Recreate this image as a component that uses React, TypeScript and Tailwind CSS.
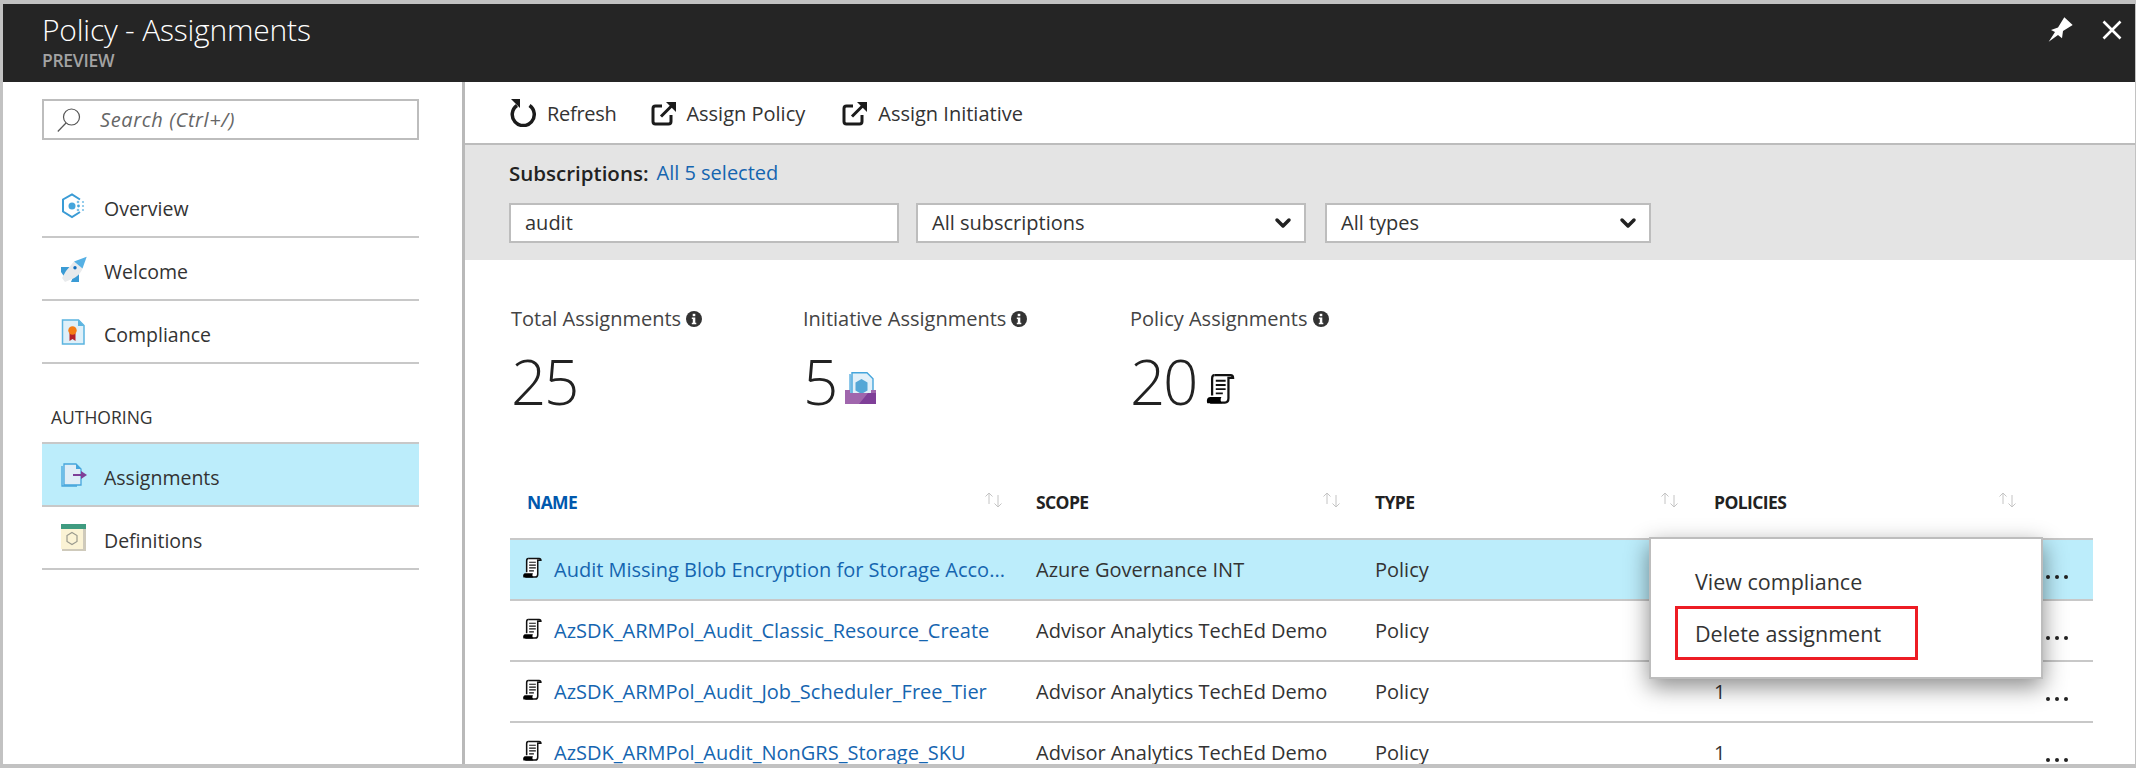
import { ChevronDown } from 'lucide-react'

const font = { fontFamily: '"Open Sans", "Noto Sans", sans-serif' }

const ScrollIcon = ({ className }: { className: string }) => (
    <svg viewBox="0 0 20 22" className={className}>
        <path d="M6 1.500h11.500c1.200 0 1.800.8 1.800 2H16V18c0 2-1 3-2.500 3H3" fill="#fff" stroke="#111" strokeWidth="1.600" />
        <path d="M6 1.500C4.800 1.500 4.400 2.500 4.400 4v12" fill="none" stroke="#111" strokeWidth="1.600" />
        <path d="M7 5.500h7M7 8.500h7M7 11.500h7M7 14.500h5" stroke="#111" strokeWidth="1.300" />
        <path d="M1 21.500c-.8-2.500.2-4.500 2-4.500h8c-.8 1.500-.8 3 .5 4.500z" fill="#000" />
    </svg>
)

const ExternalIcon = () => (
    <svg viewBox="0 0 26 26" className="h-[26px] w-[26px] shrink-0" fill="none" stroke="#1b1b1b">
        <path d="M11 6H4.500C3 6 2 7 2 8.500v13C2 23 3 24 4.500 24h13c1.500 0 2.500-1 2.500-2.500V15" strokeWidth="3" />
        <path d="M10 16.500 23 3.500" strokeWidth="3" />
        <path d="M15 2h10v10z" fill="#1b1b1b" stroke="none" />
    </svg>
)

const InfoIcon = () => (
    <svg viewBox="0 0 16 16" className="h-4 w-4 shrink-0">
        <circle cx="8" cy="8" r="8" fill="#333" />
        <rect x="6.700" y="2.800" width="2.600" height="2.400" fill="#fff" />
        <path d="M5.800 6.500h3.500v5.200h1v1.500H5.800v-1.500h1V8h-1z" fill="#fff" />
    </svg>
)

const SortIcon = () => (
    <svg viewBox="0 0 20 16" className="h-4 w-5 shrink-0 -translate-y-[3px]" fill="none" stroke="#c4c4c4" strokeWidth="1">
        <path d="M5 12V1M1.500 4.500 5 1l3.500 3.500" />
        <path d="M14 3v12M10.500 11.500 14 15l3.500-3.500" />
    </svg>
)

const OverviewIcon = () => (
    <svg viewBox="0 0 24 26" className="h-[26px] w-6">
        <path d="M19 6.500 11 1.500 2 6.500v12l9 5.500 8-5" fill="none" stroke="#3a9bd5" strokeWidth="2" />
        <circle cx="11" cy="13" r="3.500" fill="#45a5dc" />
        <circle cx="17" cy="9" r="1.300" fill="#7cc1e8" />
        <circle cx="22" cy="9" r="1.100" fill="#7cc1e8" />
        <circle cx="17.500" cy="13" r="1.400" fill="#45a5dc" />
        <circle cx="22" cy="13" r="1.100" fill="#7cc1e8" />
        <circle cx="17" cy="17" r="1.300" fill="#7cc1e8" />
        <circle cx="22" cy="17" r="1.100" fill="#7cc1e8" />
    </svg>
)

const WelcomeIcon = () => (
    <svg viewBox="0 0 26 26" className="h-[26px] w-[26px]">
        <path d="M0 11h9v10H3.500L0 16z" fill="#3a9bd5" />
        <path d="M10 26h8V15l-6 6z" fill="#3a9bd5" />
        <path d="M13 5.500l8.500 7c-1.500 4.500-5.500 8.500-10.500 10.500L4 26l-3-4 4-7z" fill="#e8eaec" />
        <path d="M25.700.7 13 5.500l8.500 7z" fill="#55b0e4" />
        <circle cx="14" cy="11.700" r="1.700" fill="#0f6cbd" />
    </svg>
)

const ComplianceIcon = () => (
    <svg viewBox="0 0 24 26" className="h-[26px] w-6">
        <path d="M1.500 1h16L23 6.500V25H1.500z" fill="#dff0f9" stroke="#5bb4e0" strokeWidth="1.500" />
        <path d="M17 1v6h6z" fill="#5bb4e0" />
        <path d="M8.500 14v8l3-2 3 2v-8z" fill="#b4202a" />
        <circle cx="11.500" cy="11.500" r="4.200" fill="#f57c14" />
    </svg>
)

const AssignmentsIcon = () => (
    <svg viewBox="0 0 26 24" className="h-6 w-[26px]">
        <path d="M1 3v20h15" fill="none" stroke="#45a5dc" strokeWidth="1.300" />
        <path d="M3 1h12l5 5v16H3z" fill="#dfeef7" stroke="#45a5dc" strokeWidth="1.300" />
        <path d="M15 1v5h5z" fill="#45a5dc" />
        <path d="M12 11h8V8l6 4-6 4v-3h-8z" fill="#7f3f98" />
    </svg>
)

const DefinitionsIcon = () => (
    <svg viewBox="0 0 26 27" className="h-[27px] w-[26px]">
        <rect x="1" y="5" width="24" height="22" fill="#cfcabb" />
        <rect x="0" y="3" width="22" height="22" fill="#fbf3d5" />
        <rect x="0" y="0" width="25" height="5" fill="#3f9b80" />
        <path d="M11 8.500l5 3v6l-5 3-5-3v-6z" fill="none" stroke="#9a9a8e" strokeWidth="1.200" />
    </svg>
)

const InitiativeIcon = () => (
    <svg viewBox="0 0 31 32" className="h-8 w-[31px]">
        <path d="M5 2v20h20" fill="#cfe4f2" stroke="#45a5dc" strokeWidth="1.200" />
        <path d="M7 .7h15l6 6V24H7z" fill="#e2f0f9" stroke="#45a5dc" strokeWidth="1.400" />
        <path d="M16.500 7l6 3.500v8l-6 3.500-6-3.500v-8z" fill="#55a7d6" />
        <path d="M0 18h5v3h21v-3h5v14H0z" fill="#a066ad" />
        <path d="M14 32l9-11h8v11z" fill="#7f3f98" />
    </svg>
)

const navTop = [
    { label: 'Overview', icon: <OverviewIcon /> },
    { label: 'Welcome', icon: <WelcomeIcon /> },
    { label: 'Compliance', icon: <ComplianceIcon /> },
]

// the first two rows have their policy count hidden behind the open menu
const rows = [
    { name: 'Audit Missing Blob Encryption for Storage Acco...', scope: 'Azure Governance INT', policies: '', selected: true },
    { name: 'AzSDK_ARMPol_Audit_Classic_Resource_Create', scope: 'Advisor Analytics TechEd Demo', policies: '', selected: false },
    { name: 'AzSDK_ARMPol_Audit_Job_Scheduler_Free_Tier', scope: 'Advisor Analytics TechEd Demo', policies: '1', selected: false },
    { name: 'AzSDK_ARMPol_Audit_NonGRS_Storage_SKU', scope: 'Advisor Analytics TechEd Demo', policies: '1', selected: false },
]

const NavRow = ({ label, icon, active }: { label: string; icon: React.ReactNode; active?: boolean }) => (
    <div className={`flex h-[63px] items-center border-b-2 border-[#c8c8c8] pl-[19px] ${active ? 'bg-[#bcedfb]' : ''}`}>
        <span className="flex w-[43px] shrink-0 items-center">{icon}</span>
        <span className="pt-1.5 text-[19.500px] text-[#333]">{label}</span>
    </div>
)

const Stat = ({ label, value, icon, width }: { label: string; value: string; icon?: React.ReactNode; width: string }) => (
    <div className={`flex flex-col ${width}`}>
        <div className="flex items-center gap-[5px] text-[20px] leading-6 text-[#444]">
            {label}
            <InfoIcon />
        </div>
        <div className="mt-[17px] flex h-[66px] items-center gap-[9px] text-[62px] font-light leading-none tracking-[-2.500px] text-[#222]">
            {value}
            {icon && <span className="mt-[14px]">{icon}</span>}
        </div>
    </div>
)

const App = () => {
    return (
        <div style={font} className="relative h-[768px] w-[2136px] overflow-hidden border-t-4 border-r border-b-4 border-l-[3px] border-[#c2c2c2] bg-white">
            {/* blade header */}
            <div className="flex h-[78px] items-start justify-between bg-[#252525] pr-[13px] pl-[39px]">
                <div className="pt-1">
                    <h1 className="text-[30px] leading-[44px] font-light tracking-[-0.2px] text-white">Policy - Assignments</h1>
                    <div className="text-[17.500px] leading-[17px] font-semibold tracking-[-0.3px] text-[#a3a3a3]">PREVIEW</div>
                </div>
                <div className="flex items-center gap-[29px] pt-[13px]">
                    <svg viewBox="0 0 25 25" className="h-[25px] w-[25px]" fill="#fff">
                        <path d="M.7 24.700 7 15 3 13l7-2.500L16.300.3l8.400 7.700L15 14l-1 7.300-4-3.300z" />
                    </svg>
                    <svg viewBox="0 0 20 20" className="h-5 w-5" stroke="#fff" strokeWidth="2.600">
                        <path d="M1.500 1.500l17 17M18.500 1.500l-17 17" />
                    </svg>
                </div>
            </div>

            <div className="flex h-[682px]">
                {/* sidebar */}
                <div className="w-[462px] shrink-0 border-r-[3px] border-[#b9b9b9] pt-[17px] pr-[43px] pl-[39px]">
                    <div className="flex h-[41px] items-center border-2 border-[#bdbdbd] pl-[13px]">
                        <svg viewBox="0 0 24 24" className="mr-[19px] h-6 w-6 shrink-0" fill="none" stroke="#555" strokeWidth="1.200">
                            <circle cx="14.500" cy="9" r="8" />
                            <path d="M9 15 .8 23.500" />
                        </svg>
                        <span className="text-[20px] tracking-[0.6px] italic text-[#666]">Search (Ctrl+/)</span>
                    </div>
                    <div className="mt-[35px]">
                        {navTop.map((item) => <NavRow key={item.label} {...item} />)}
                    </div>
                    <div className="flex h-[78px] items-end pb-[11px] pl-[9px] text-[17.500px] leading-7 font-medium text-[#333]">AUTHORING</div>
                    <div className="border-t-2 border-[#c8c8c8]">
                        <NavRow label="Assignments" icon={<AssignmentsIcon />} active />
                        <NavRow label="Definitions" icon={<DefinitionsIcon />} />
                    </div>
                </div>

                {/* main */}
                <div className="relative min-w-0 flex-1">
                    <div className="flex h-[63px] items-center border-b-2 border-[#bcbcbc] pl-[44px] text-[20px] text-[#333]">
                        <svg viewBox="0 0 28 28" className="mr-[10px] h-7 w-7 shrink-0" fill="none" stroke="#1b1b1b" strokeWidth="3.500">
                            <path d="M8 6.500a11 11 0 1 0 12.500 0" />
                            <path d="M2 0h9v9z" fill="#1b1b1b" stroke="none" />
                        </svg>
                        <span className="mr-[35px] pt-[2px] tracking-[-0.3px]">Refresh</span>
                        <ExternalIcon />
                        <span className="mr-[37px] ml-[9px] pt-[2px]">Assign Policy</span>
                        <ExternalIcon />
                        <span className="ml-[10px] pt-[2px]">Assign Initiative</span>
                    </div>

                    <div className="h-[115px] bg-[#e4e4e4] pt-4 pl-[44px]">
                        <div className="flex gap-2 text-[20px] leading-6">
                            <span className="text-[20.500px] font-semibold text-[#222]">Subscriptions:</span>
                            <span className="text-[#1565b0]">All 5 selected</span>
                        </div>
                        <div className="mt-[18px] flex text-[20px] text-[#333]">
                            <div className="flex h-[40px] w-[390px] items-center border-2 border-[#bdbdbd] bg-white pl-[14px]">audit</div>
                            <div className="ml-[17px] flex h-[40px] w-[390px] items-center justify-between border-2 border-[#bdbdbd] bg-white pr-[9px] pl-[14px]">
                                All subscriptions
                                <ChevronDown size={24} strokeWidth={3.500} color="#222" />
                            </div>
                            <div className="ml-[19px] flex h-[40px] w-[326px] items-center justify-between border-2 border-[#bdbdbd] bg-white pr-[9px] pl-[14px]">
                                All types
                                <ChevronDown size={24} strokeWidth={3.500} color="#222" />
                            </div>
                        </div>
                    </div>

                    <div className="flex pt-[47px] pl-[46px]">
                        <Stat label="Total Assignments" value="25" width="w-[292px]" />
                        <Stat label="Initiative Assignments" value="5" width="w-[327px]" icon={<InitiativeIcon />} />
                        <Stat label="Policy Assignments" value="20" width="w-[300px]" icon={<ScrollIcon className="h-[31px] w-[30px]" />} />
                    </div>

                    {/* table */}
                    <div className="mt-[63px] ml-[45px] w-[1583px]">
                        <div className="grid h-[63px] grid-cols-[526px_339px_339px_332px_47px] items-center border-b-2 border-[#c8c8c8] pb-[10px] text-[17.500px] font-bold tracking-[-0.6px] text-[#222]">
                            <div className="flex items-center justify-between pr-[32px] pl-[17px] text-[#0058ad]">NAME<SortIcon /></div>
                            <div className="flex items-center justify-between pr-[33px]">SCOPE<SortIcon /></div>
                            <div className="flex items-center justify-between pr-[34px]">TYPE<SortIcon /></div>
                            <div className="flex items-center justify-between pr-[28px]">POLICIES<SortIcon /></div>
                            <div />
                        </div>
                        {rows.map((row) => (
                            <div
                                key={row.name}
                                className={`grid h-[61px] grid-cols-[526px_339px_339px_332px_47px] items-center border-b-2 border-[#c8c8c8] text-[20px] text-[#333] ${row.selected ? 'bg-[#bcedfb]' : ''}`}
                            >
                                <div className="flex items-center pl-3">
                                    <ScrollIcon className="h-[21px] w-[20px] shrink-0 -translate-y-[2px]" />
                                    <span className="ml-3 whitespace-nowrap text-[#1565b0]">{row.name}</span>
                                </div>
                                <div>{row.scope}</div>
                                <div>Policy</div>
                                <div>{row.policies}</div>
                                <div className="flex gap-[5px] pt-[14px]">
                                    <span className="h-1 w-1 rounded-full bg-[#222]" />
                                    <span className="h-1 w-1 rounded-full bg-[#222]" />
                                    <span className="h-1 w-1 rounded-full bg-[#222]" />
                                </div>
                            </div>
                        ))}
                    </div>

                    {/* context menu */}
                    <div className="absolute top-[455px] left-[1184px] h-[142px] w-[394px] border-2 border-[#bdbdbd] bg-white shadow-[0_8px_22px_rgba(0,0,0,0.45)]">
                        <div className="pt-[29px] pl-[44px] text-[21.500px] leading-7 text-[#333]">View compliance</div>
                        <div className="mt-[10px] ml-6 flex h-[54px] w-[243px] items-center border-[3px] border-[#ed1c24] pt-[3px] pl-[17px] text-[21.500px] text-[#333]">Delete assignment</div>
                    </div>
                </div>
            </div>
        </div>
    )
}

export default App
